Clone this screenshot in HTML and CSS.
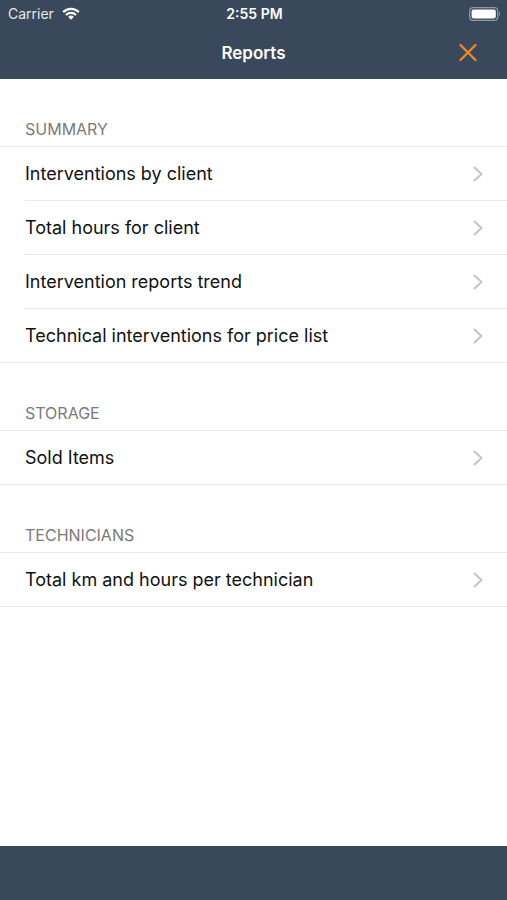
FILE: index.html
```html
<!DOCTYPE html>
<html lang="en">
<head>
    <meta charset="utf-8">
    <meta name="viewport" content="width=device-width, initial-scale=1">
    <title>Reports</title>
    <link rel="stylesheet" href="styles.css">
</head>
<body>

<header class="header">
    <div class="status-bar">
        <div class="carrier">
            <span>Carrier</span>
            <svg class="wifi" viewBox="0 0 18 13" width="18" height="13">
                <path d="M1.2 5.1a11 11 0 0 1 15.6 0M4 8a7.1 7.1 0 0 1 10 0" fill="none" stroke="#fff" stroke-width="2.2"/>
                <path d="M9 12.7L6.2 9.9a4 4 0 0 1 5.6 0z" fill="#fff"/>
            </svg>
        </div>
        <div class="time">2:55 PM</div>
        <div class="battery">
            <svg viewBox="0 0 32 14" width="32" height="14">
                <rect x="0.7" y="0.7" width="28" height="12.6" rx="3.4" fill="none" stroke="#8f99a5" stroke-width="1.2"/>
                <rect x="2.6" y="2.6" width="24.2" height="8.8" rx="1.8" fill="#fff"/>
                <path d="M30 5a2.3 2.3 0 0 1 0 4z" fill="#8f99a5"/>
            </svg>
        </div>
    </div>
    <div class="nav-bar">
        <h1>Reports</h1>
        <button type="button" class="close" aria-label="Close">
            <svg viewBox="0 0 18 18" width="18" height="18">
                <path d="M1.5 1l15 15M16.5 1l-15 15" fill="none" stroke="#f08a24" stroke-width="2.2" stroke-linecap="round"/>
            </svg>
        </button>
    </div>
</header>

<main>
    <section>
        <h2>SUMMARY</h2>
        <ul class="list">
            <li><a href="#">Interventions by client <svg class="chevron" viewBox="0 0 10 16"><path d="M1 1l7.5 7L1 15"/></svg></a></li>
            <li><a href="#">Total hours for client <svg class="chevron" viewBox="0 0 10 16"><path d="M1 1l7.5 7L1 15"/></svg></a></li>
            <li><a href="#">Intervention reports trend <svg class="chevron" viewBox="0 0 10 16"><path d="M1 1l7.5 7L1 15"/></svg></a></li>
            <li><a href="#">Technical interventions for price list <svg class="chevron" viewBox="0 0 10 16"><path d="M1 1l7.5 7L1 15"/></svg></a></li>
        </ul>
    </section>

    <section>
        <h2>STORAGE</h2>
        <ul class="list">
            <li><a href="#">Sold Items <svg class="chevron" viewBox="0 0 10 16"><path d="M1 1l7.5 7L1 15"/></svg></a></li>
        </ul>
    </section>

    <section>
        <h2>TECHNICIANS</h2>
        <ul class="list">
            <li><a href="#">Total km and hours per technician <svg class="chevron" viewBox="0 0 10 16"><path d="M1 1l7.5 7L1 15"/></svg></a></li>
        </ul>
    </section>
</main>

<footer class="toolbar"></footer>

</body>
</html>
```
FILE: styles.css
```css
body {
    display: flex;
    flex-direction: column;
    min-height: 100vh;
    margin: 0;
    background-color: #fff;
    color: #111;
    font-family: Inter, "Liberation Sans", sans-serif;
}

.header {
    background-color: #39495b;
    color: #fff;
}

.status-bar {
    display: grid;
    grid-template-columns: 1fr auto 1fr;
    align-items: center;
    height: 27px;
    padding: 0 6px 0 8px;
    font-size: 14px;
}

.carrier {
    display: flex;
    align-items: center;
    gap: 8px;
    color: #e3e8ed;
}

.time {
    font-weight: 600;
}

.battery {
    display: flex;
    justify-content: flex-end;
}

.nav-bar {
    display: grid;
    grid-template-columns: 1fr auto 1fr;
    align-items: center;
    height: 52px;
    padding: 0 30px;
}

.nav-bar h1 {
    grid-column: 2;
    margin: 0;
    font-size: 17px;
    font-weight: 600;
}

.close {
    display: flex;
    justify-self: end;
    padding: 0;
    border: none;
    background: none;
    cursor: pointer;
}

main {
    flex: 1;
}

h2 {
    margin: 0;
    padding: 40px 25px 7px;
    border-bottom: 1px solid #e9e9e9;
    color: #7a7a7a;
    font-size: 16px;
    font-weight: 400;
    line-height: 20px;
}

.list {
    margin: 0;
    padding: 0;
    border-bottom: 1px solid #e9e9e9;
    list-style: none;
}

.list li {
    padding-left: 25px;
}

.list a {
    display: flex;
    align-items: center;
    justify-content: space-between;
    height: 53px;
    padding-right: 24px;
    color: inherit;
    font-size: 18px;
    text-decoration: none;
}

.list li + li a {
    border-top: 1px solid #e9e9e9;
}

.chevron {
    width: 10px;
    height: 16px;
    fill: none;
    stroke: #c4c4c8;
    stroke-width: 2;
}

.toolbar {
    height: 54px;
    background-color: #39495b;
}
```
